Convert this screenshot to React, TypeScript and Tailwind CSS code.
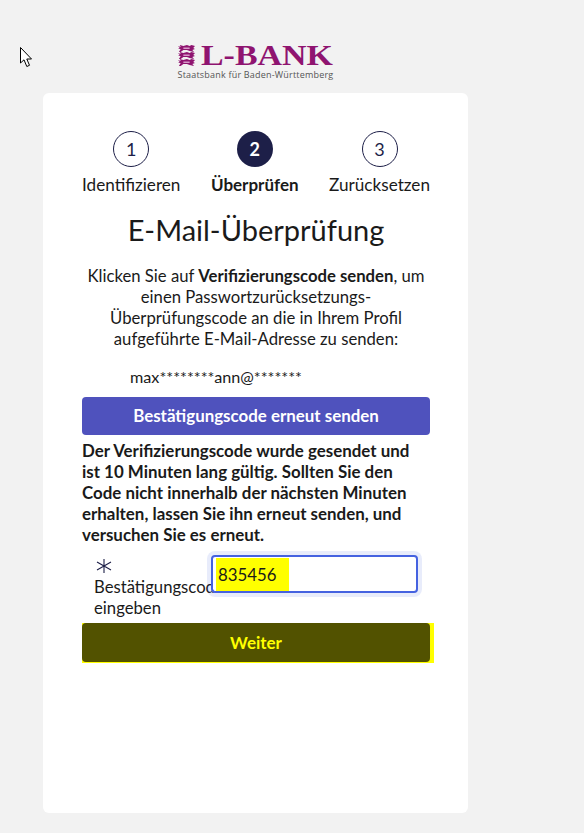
const font = "font-['Lato','Liberation_Sans',sans-serif]";

function Cursor() {
  return (
    <svg className="absolute left-[20px] top-[47px]" width="13" height="21" viewBox="0 0 13 21">
      <path
        d="M0.5 0.5 L0.5 16 L4 12.8 L6.8 19.5 L9.5 18.3 L6.8 12 L11.5 12 Z"
        fill="#fff"
        stroke="#000"
        strokeWidth="1"
      />
    </svg>
  );
}

// stacked lions of the state arms, roughly drawn
function Arms() {
  const rows = [0, 7, 14];
  return (
    <svg width="17" height="21" viewBox="0 0 19 21" preserveAspectRatio="none" className="shrink-0">
      {rows.map((y) => (
        <g key={y} transform={`translate(0 ${y})`}>
          <path
            d="M0 1 L3 2 L2 0 L6 1 L10 0 L13 1 L15 0 L19 1 L17 3 L19 4 L16 5 L18 7 L13 6 L10 5 L6 5 L3 7 L1 7 L3 4 L0 4 L2 3 Z"
            fill="#8f1470"
          />
          <path d="M6 2.5 H13 V4 H6 Z" fill="#d79ac8" />
        </g>
      ))}
    </svg>
  );
}

function Logo() {
  return (
    <div className="flex flex-col items-start w-[156px] h-[50px] mx-auto">
      <div className="flex items-center gap-[6px] h-[26px]">
        <Arms />
        <span className="font-['Liberation_Serif',serif] text-[#8f1470] text-[30px] leading-[26px] whitespace-nowrap origin-left scale-x-[1.13] font-bold">
          L-BANK
        </span>
      </div>
      <span className="font-['Open_Sans',sans-serif] text-[#555555] text-[9px] leading-[12px] mt-[1px] tracking-[0.2px] whitespace-nowrap">
        Staatsbank für Baden-Württemberg
      </span>
    </div>
  );
}

function Step({ n, label, active }: { n: number; label: string; active?: boolean }) {
  return (
    <div className="flex flex-col items-center">
      <div
        className={
          active
            ? "w-9 h-9 rounded-full bg-[#1d1f48] text-white font-bold flex items-center justify-center text-[18px]"
            : "w-9 h-9 rounded-full border border-[#1d1f48] text-[#1d1f48] flex items-center justify-center text-[18px]"
        }
      >
        {n}
      </div>
      <span className={active ? "mt-[6px] text-[17px] leading-[24px] font-bold" : "mt-[6px] text-[17.15px] leading-[24px]"}>
        {label}
      </span>
    </div>
  );
}

export default function App() {
  return (
    <div className={`${font} relative min-h-[833px] bg-[#f2f2f2] text-[#1a1a1a] pt-[42px] overflow-hidden`}>
      <Cursor />
      <div className="w-[425px] ml-[43px]">
        <Logo />
        <div className="mt-[1px] h-[720px] bg-white rounded-[6px] pl-[39px] pr-[38px] pt-[38px]">
          <div className="flex justify-between items-start">
            <Step n={1} label="Identifizieren" />
            <Step n={2} label="Überprüfen" active />
            <Step n={3} label="Zurücksetzen" />
          </div>

          <h1 className="mt-[15px] text-center text-[29px] leading-[36px] font-normal">E-Mail-Überprüfung</h1>

          <p className="mt-[18px] text-center text-[16.7px] leading-[21px]">
            Klicken Sie auf <b>Verifizierungscode senden</b>, um einen Passwortzurücksetzungs-Überprüfungscode an die in
            Ihrem Profil aufgeführte E-Mail-Adresse zu senden:
          </p>

          <p className="mt-[15px] pl-[48px] text-[16.2px] leading-[24px]">max********ann@*******</p>

          <button className="mt-[8px] w-full h-[38px] rounded-[4px] bg-[#4f52bd] text-white font-bold text-[16.9px]">
            Bestätigungscode erneut senden
          </button>

          <p className="mt-[5px] w-[340px] font-bold text-[16.9px] leading-[21px]">
            Der Verifizierungscode wurde gesendet und ist 10 Minuten lang gültig. Sollten Sie den Code nicht innerhalb
            der nächsten Minuten erhalten, lassen Sie ihn erneut senden, und versuchen Sie es erneut.
          </p>

          <div className="mt-[10px] flex items-start h-[68px]">
            <div className="w-[129px] pl-[12px] shrink-0">
              <svg width="16" height="14" viewBox="0 0 16 14" className="mt-[4px] mb-[4px] ml-[2px]">
                <path d="M8 0 V14 M1 3 L15 11 M1 11 L15 3" stroke="#1d1f48" strokeWidth="1.1" fill="none" />
              </svg>
              <div className="text-[16.7px] leading-[21px] whitespace-nowrap">
                Bestätigungscode
                <br />
                eingeben
              </div>
            </div>
            <div className="w-[207px] h-[38px] shrink-0 rounded-[4px] border-2 border-[#4562e0] bg-white bg-clip-padding shadow-[0_0_0_4px_rgba(69,98,224,0.12)] flex items-stretch pl-[3px] pt-[1px] relative z-10">
              <span className="w-[73px] bg-[#ffff00] text-[16.8px] leading-[33px] pl-[2px]">835456</span>
            </div>
          </div>

          <div className="w-[352px] h-[40px] bg-[#ffff00] pb-[1px]">
            <button className="w-[348px] h-[39px] rounded-[4px] bg-[#525200] text-[#ffff00] font-bold text-[17px]">
              Weiter
            </button>
          </div>
        </div>
      </div>
    </div>
  );
}
